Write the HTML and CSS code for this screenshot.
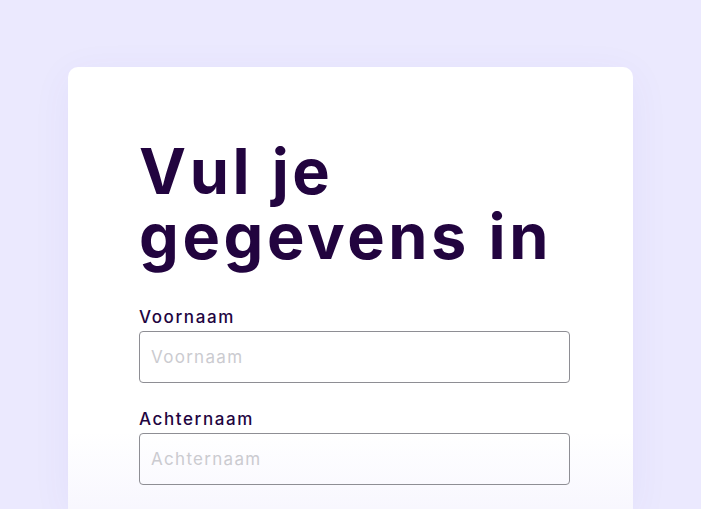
FILE: index.html
```html
<!DOCTYPE html>
<html lang="nl">
<head>
<meta charset="UTF-8">
<meta name="viewport" content="width=device-width, initial-scale=1.0">
<title>Vul je gegevens in</title>
<link rel="stylesheet" href="styles.css">
</head>
<body>
<div class="card">
  <h1 class="title">Vul je gegevens in</h1>
  <form class="form">
    <div class="field">
      <label class="label" for="voornaam">Voornaam</label>
      <input class="input" type="text" id="voornaam" placeholder="Voornaam">
    </div>
    <div class="field">
      <label class="label" for="achternaam">Achternaam</label>
      <input class="input" type="text" id="achternaam" placeholder="Achternaam">
    </div>
  </form>
</div>
</body>
</html>
```

FILE: styles.css
```css
body {
  margin: 0;
  height: 509px;
  overflow: hidden;
  background-color: #ebe9fe;
  font-family: 'Inter', 'Noto Sans', sans-serif;
}
.card {
  margin: 67px 0 0 68px;
  width: 565px;
  height: 442px;
  box-sizing: border-box;
  padding: 72px 63px 0 71px;
  background: linear-gradient(to bottom, #fff 0, #fff 365px, #f8f7fe 442px);
  border-radius: 10px 10px 0 0;
  box-shadow: 0 8px 40px rgba(90, 70, 200, 0.06);
}
.title {
  margin: 0 0 36px;
  max-width: 430px;
  font-size: 63px;
  line-height: 65px;
  font-weight: 700;
  letter-spacing: 3.6px;
  color: #22043f;
}
.field {
  display: flex;
  flex-direction: column;
  margin-bottom: 24px;
}
.label {
  padding-top: 2px;
  margin-bottom: 4px;
  font-size: 17px;
  font-weight: 500;
  letter-spacing: 1.6px;
  color: #22043f;
}
.input {
  height: 52px;
  box-sizing: border-box;
  padding: 0 11px;
  border: 1px solid #8e8e94;
  border-radius: 4px;
  background: transparent;
  font-family: inherit;
  font-size: 17px;
  letter-spacing: 1.3px;
  color: #22043f;
}
.input::placeholder {
  color: #cbcbd0;
}
```
